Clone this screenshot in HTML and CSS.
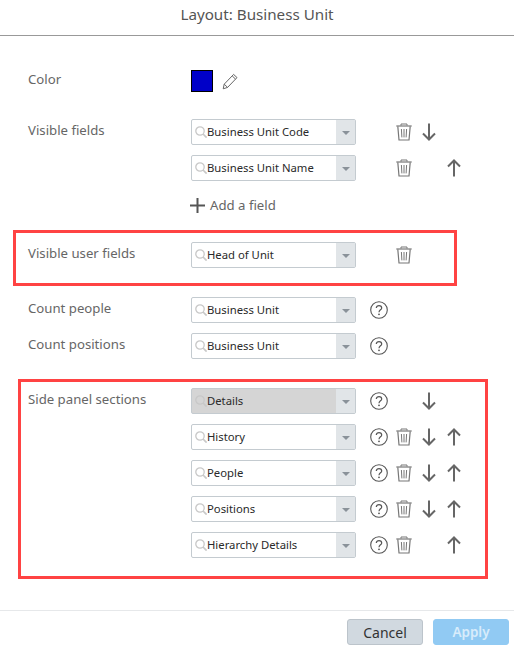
FILE: index.html
```html
<!DOCTYPE html>
<html lang="en">
<head>
  <meta charset="UTF-8">
  <meta name="viewport" content="width=device-width, initial-scale=1.0">
  <title>Layout: Business Unit</title>
  <link rel="stylesheet" href="styles.css">
</head>
<body>

  <!-- Shared icons -->
  <svg class="icon-defs" width="0" height="0" aria-hidden="true">
    <symbol id="i-search" viewBox="0 0 12 12">
      <circle cx="5" cy="5" r="4.2" fill="none" stroke="currentColor" stroke-width="1.3"/>
      <path d="M8 8 11.6 11.6" fill="none" stroke="currentColor" stroke-width="1.7"/>
    </symbol>
    <symbol id="i-trash" viewBox="0 0 16 18">
      <path d="M0.3 3H15.7" fill="none" stroke="currentColor" stroke-width="1.2"/>
      <path d="M5 2.6V1H11V2.6" fill="none" stroke="currentColor" stroke-width="1"/>
      <path d="M1.8 3.4 3 17H13L14.2 3.4" fill="none" stroke="currentColor" stroke-width="1.2"/>
      <path d="M5.4 6 5.9 14.4M8 6V14.4M10.6 6 10.1 14.4" fill="none" stroke="currentColor" stroke-width="1"/>
    </symbol>
    <symbol id="i-down" viewBox="0 0 14 18">
      <path d="M7 0.5V16.5M1 10.5 7 16.5 13 10.5" fill="none" stroke="currentColor" stroke-width="2"/>
    </symbol>
    <symbol id="i-up" viewBox="0 0 14 18">
      <path d="M7 17.5V1.5M1 7.5 7 1.5 13 7.5" fill="none" stroke="currentColor" stroke-width="2"/>
    </symbol>
    <symbol id="i-help" viewBox="0 0 18 18">
      <circle cx="9" cy="9" r="8.3" fill="none" stroke="currentColor" stroke-width="1.1"/>
      <path d="M6.3 7.1C6.3 5.5 7.5 4.6 9 4.6 10.6 4.6 11.7 5.6 11.7 6.9 11.7 8.7 9 9 9 11.2" fill="none" stroke="currentColor" stroke-width="1.2"/>
      <circle cx="9" cy="13.3" r="0.9" fill="currentColor"/>
    </symbol>
  </svg>

  <header class="dialog-title">Layout: Business Unit</header>

  <main class="form">

    <!-- Color -->
    <div class="field color-field">
      <div class="field-label">Color</div>
      <div class="color-value">
        <span class="swatch"></span>
        <svg class="pencil" width="16" height="17" viewBox="0 0 16 17">
          <path d="M1.2 15.8 2.2 11.2 11.6 1.4 15 4.6 5.6 14.4ZM2.2 11.2 5.6 14.4M10.2 2.9 13.5 6.1" fill="none" stroke="currentColor" stroke-width="1"/>
        </svg>
      </div>
    </div>

    <!-- Visible fields -->
    <div class="field visible-fields">
      <div class="field-label">Visible fields</div>
      <div class="rows">
        <div class="row">
          <div class="combo"><svg class="search"><use href="#i-search"/></svg><span class="combo-text">Business Unit Code</span><span class="combo-btn"><i class="caret"></i></span></div>
          <div class="actions">
            <span class="slot"></span>
            <span class="slot"><svg class="trash"><use href="#i-trash"/></svg></span>
            <span class="slot"><svg class="arrow"><use href="#i-down"/></svg></span>
            <span class="slot"></span>
          </div>
        </div>
        <div class="row">
          <div class="combo"><svg class="search"><use href="#i-search"/></svg><span class="combo-text">Business Unit Name</span><span class="combo-btn"><i class="caret"></i></span></div>
          <div class="actions">
            <span class="slot"></span>
            <span class="slot"><svg class="trash"><use href="#i-trash"/></svg></span>
            <span class="slot"></span>
            <span class="slot"><svg class="arrow"><use href="#i-up"/></svg></span>
          </div>
        </div>
        <div class="add-field">
          <svg class="plus" width="15" height="15" viewBox="0 0 15 15"><path d="M7.5 0V15M0 7.5H15" fill="none" stroke="currentColor" stroke-width="2"/></svg>
          <span>Add a field</span>
        </div>
      </div>
    </div>

    <!-- Visible user fields -->
    <div class="field outlined user-fields">
      <div class="field-label">Visible user fields</div>
      <div class="rows">
        <div class="row">
          <div class="combo"><svg class="search"><use href="#i-search"/></svg><span class="combo-text">Head of Unit</span><span class="combo-btn"><i class="caret"></i></span></div>
          <div class="actions">
            <span class="slot"></span>
            <span class="slot"><svg class="trash"><use href="#i-trash"/></svg></span>
          </div>
        </div>
      </div>
    </div>

    <!-- Counts -->
    <div class="field count-field">
      <div class="field-label">Count people</div>
      <div class="rows">
        <div class="row">
          <div class="combo"><svg class="search"><use href="#i-search"/></svg><span class="combo-text">Business Unit</span><span class="combo-btn"><i class="caret"></i></span></div>
          <div class="actions">
            <span class="slot"><svg class="help"><use href="#i-help"/></svg></span>
          </div>
        </div>
      </div>
    </div>
    <div class="field count-field">
      <div class="field-label">Count positions</div>
      <div class="rows">
        <div class="row">
          <div class="combo"><svg class="search"><use href="#i-search"/></svg><span class="combo-text">Business Unit</span><span class="combo-btn"><i class="caret"></i></span></div>
          <div class="actions">
            <span class="slot"><svg class="help"><use href="#i-help"/></svg></span>
          </div>
        </div>
      </div>
    </div>

    <!-- Side panel sections -->
    <div class="field outlined side-sections">
      <div class="field-label">Side panel sections</div>
      <div class="rows">
        <div class="row">
          <div class="combo combo-disabled"><svg class="search"><use href="#i-search"/></svg><span class="combo-text">Details</span><span class="combo-btn"><i class="caret"></i></span></div>
          <div class="actions">
            <span class="slot"><svg class="help"><use href="#i-help"/></svg></span>
            <span class="slot"></span>
            <span class="slot"><svg class="arrow"><use href="#i-down"/></svg></span>
            <span class="slot"></span>
          </div>
        </div>
        <div class="row">
          <div class="combo"><svg class="search"><use href="#i-search"/></svg><span class="combo-text">History</span><span class="combo-btn"><i class="caret"></i></span></div>
          <div class="actions">
            <span class="slot"><svg class="help"><use href="#i-help"/></svg></span>
            <span class="slot"><svg class="trash"><use href="#i-trash"/></svg></span>
            <span class="slot"><svg class="arrow"><use href="#i-down"/></svg></span>
            <span class="slot"><svg class="arrow"><use href="#i-up"/></svg></span>
          </div>
        </div>
        <div class="row">
          <div class="combo"><svg class="search"><use href="#i-search"/></svg><span class="combo-text">People</span><span class="combo-btn"><i class="caret"></i></span></div>
          <div class="actions">
            <span class="slot"><svg class="help"><use href="#i-help"/></svg></span>
            <span class="slot"><svg class="trash"><use href="#i-trash"/></svg></span>
            <span class="slot"><svg class="arrow"><use href="#i-down"/></svg></span>
            <span class="slot"><svg class="arrow"><use href="#i-up"/></svg></span>
          </div>
        </div>
        <div class="row">
          <div class="combo"><svg class="search"><use href="#i-search"/></svg><span class="combo-text">Positions</span><span class="combo-btn"><i class="caret"></i></span></div>
          <div class="actions">
            <span class="slot"><svg class="help"><use href="#i-help"/></svg></span>
            <span class="slot"><svg class="trash"><use href="#i-trash"/></svg></span>
            <span class="slot"><svg class="arrow"><use href="#i-down"/></svg></span>
            <span class="slot"><svg class="arrow"><use href="#i-up"/></svg></span>
          </div>
        </div>
        <div class="row">
          <div class="combo"><svg class="search"><use href="#i-search"/></svg><span class="combo-text">Hierarchy Details</span><span class="combo-btn"><i class="caret"></i></span></div>
          <div class="actions">
            <span class="slot"><svg class="help"><use href="#i-help"/></svg></span>
            <span class="slot"><svg class="trash"><use href="#i-trash"/></svg></span>
            <span class="slot"></span>
            <span class="slot"><svg class="arrow"><use href="#i-up"/></svg></span>
          </div>
        </div>
      </div>
    </div>

  </main>

  <!-- Footer -->
  <footer class="dialog-footer">
    <button class="btn btn-cancel">Cancel</button>
    <button class="btn btn-apply" disabled>Apply</button>
  </footer>

</body>
</html>
```

FILE: styles.css
```css
html, body {
  height: 100%;
}

body {
  margin: 0;
  font-family: "Noto Sans", Arial, sans-serif;
  background-color: #fff;
  color: #666;
  display: flex;
  flex-direction: column;
  overflow: hidden;
}

.icon-defs {
  position: absolute;
}

.dialog-title {
  height: 35px;
  line-height: 29px;
  border-bottom: 1px solid #999;
  text-align: center;
  font-size: 15.2px;
  color: #555;
}

.form {
  height: 575px;
  box-sizing: border-box;
  border-bottom: 1px solid #e6e8ea;
}

.field {
  display: flex;
  font-size: 13.2px;
  padding-left: 28px;
}

.field-label {
  width: 163px;
  flex: none;
  line-height: 18px;
}

.rows {
  display: flex;
  flex-direction: column;
  gap: 10px;
}

.row {
  display: flex;
  align-items: center;
}

/* Color row */
.color-value {
  display: flex;
  align-items: center;
  gap: 9px;
}

.color-field {
  margin-top: 34px;
}

.swatch {
  width: 20px;
  height: 20px;
  background-color: #0000c8;
  border: 1px solid #000;
}

.pencil {
  color: #666;
}

.visible-fields {
  margin-top: 27px;
}

.visible-fields .field-label {
  padding-top: 2px;
}

.add-field {
  display: flex;
  align-items: center;
  gap: 5px;
  height: 20px;
  margin-top: 4px;
  margin-left: -1px;
  font-size: 13.2px;
}

.plus {
  color: #555;
}

/* Red highlight boxes */
.outlined {
  border: 3px solid #ff4343;
}

.user-fields {
  width: 444px;
  box-sizing: border-box;
  margin: 15px 0 0 13px;
  padding: 9px 0 15px 12px;
}

.side-sections {
  width: 470px;
  box-sizing: border-box;
  margin: 20px 0 0 18px;
  padding: 6px 0 18px 7px;
}

.side-sections .field-label {
  padding-top: 2px;
}

.count-field {
  margin-top: 10px;
}

.user-fields + .count-field {
  margin-top: 11px;
}

.count-field .field-label {
  padding-top: 2px;
}

.user-fields .field-label {
  padding-top: 2px;
}

/* Combo box */
.combo {
  display: flex;
  align-items: center;
  width: 165px;
  height: 26px;
  box-sizing: border-box;
  border: 1px solid #c4cbd0;
  border-radius: 2px;
  background-color: #fff;
  color: #2a2a2a;
  font-size: 11.3px;
}

.combo-disabled {
  background-color: #d5d5d5;
}

.search {
  width: 12px;
  height: 12px;
  margin-left: 3px;
  color: #c8c8c8;
  flex: none;
}

.combo-text {
  flex: 1;
  white-space: nowrap;
  padding-bottom: 2px;
}

.combo-btn {
  width: 19px;
  height: 100%;
  background-color: #e1e5e8;
  display: flex;
  align-items: center;
  justify-content: center;
  flex: none;
}

.caret {
  width: 0;
  height: 0;
  border-left: 4px solid transparent;
  border-right: 4px solid transparent;
  border-top: 4px solid #8a9299;
  margin-top: 2px;
}

/* Icon slots next to a combo */
.actions {
  display: flex;
  margin-left: 10px;
}

.slot {
  width: 25px;
  height: 26px;
  display: flex;
  align-items: center;
  justify-content: center;
}

.trash {
  width: 16px;
  height: 18px;
  color: #777;
}

.arrow {
  width: 14px;
  height: 18px;
  color: #666;
}

.help {
  width: 18px;
  height: 18px;
  color: #555;
}

/* Footer */
.dialog-footer {
  display: flex;
  justify-content: flex-end;
  gap: 10px;
  padding: 8px 5px 0 0;
}

.btn {
  width: 76px;
  height: 26px;
  box-sizing: border-box;
  border-radius: 3px;
  padding: 0;
  font-family: inherit;
  font-size: 14px;
}

.btn-cancel {
  background-color: #d1d9e0;
  border: 1px solid #bcc4cb;
  color: #333;
}

.btn-apply {
  background-color: #91caf3;
  border: 1px solid #91caf3;
  color: #d8ecfb;
  font-weight: 600;
  font-size: 13.5px;
}
```
